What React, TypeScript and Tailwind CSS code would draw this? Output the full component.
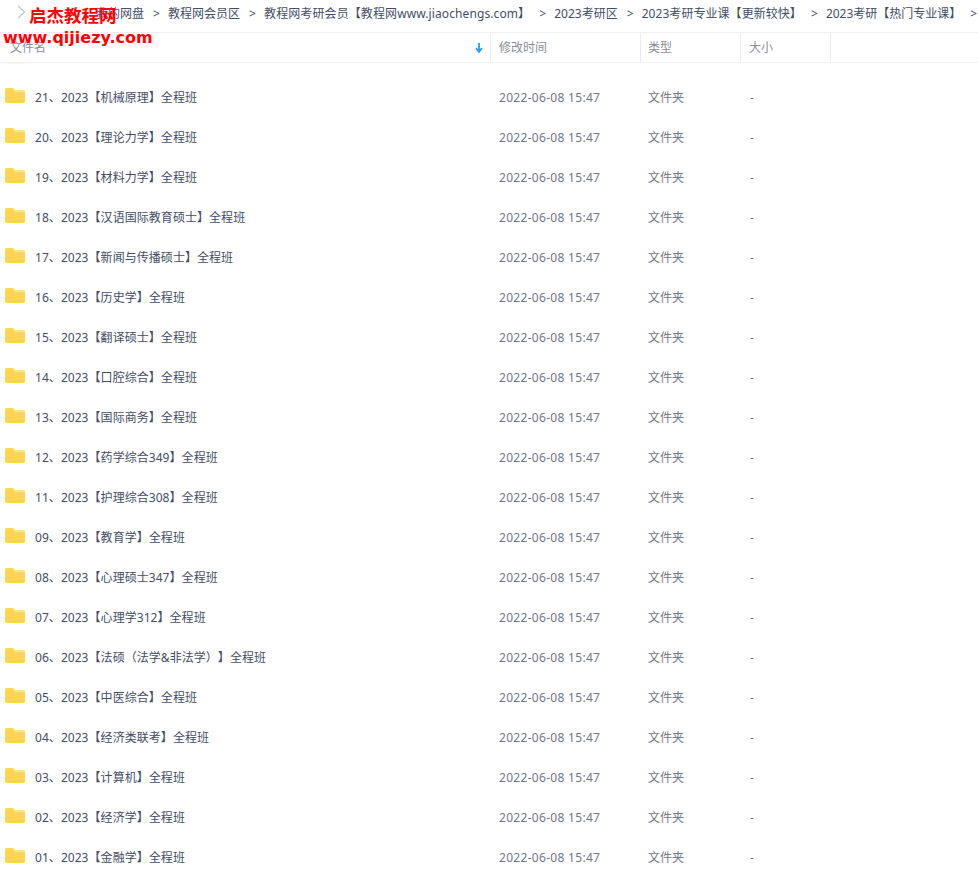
const names = [
  "21、2023【机械原理】全程班",
  "20、2023【理论力学】全程班",
  "19、2023【材料力学】全程班",
  "18、2023【汉语国际教育硕士】全程班",
  "17、2023【新闻与传播硕士】全程班",
  "16、2023【历史学】全程班",
  "15、2023【翻译硕士】全程班",
  "14、2023【口腔综合】全程班",
  "13、2023【国际商务】全程班",
  "12、2023【药学综合349】全程班",
  "11、2023【护理综合308】全程班",
  "09、2023【教育学】全程班",
  "08、2023【心理硕士347】全程班",
  "07、2023【心理学312】全程班",
  "06、2023【法硕（法学&非法学）】全程班",
  "05、2023【中医综合】全程班",
  "04、2023【经济类联考】全程班",
  "03、2023【计算机】全程班",
  "02、2023【经济学】全程班",
  "01、2023【金融学】全程班",
];

const crumbs: [string, string][] = [
  ["我的网盘", ""],
  ["教程网会员区", ""],
  ["教程网考研会员【教程网www.jiaochengs.com】", "tracking-[0.1px]"],
  ["2023考研区", ""],
  ["2023考研专业课【更新较快】", "tracking-[0.05px]"],
  ["2023考研【热门专业课】", ""],
];

function Folder() {
  return (
    <svg width="20" height="15" viewBox="0 0 20 15" className="shrink-0">
      <path d="M1.5 0H7C8 0 8.5.5 9.2 1.3L10 2.2H18.5C19.4 2.2 20 2.8 20 3.7V13.5C20 14.4 19.4 15 18.5 15H1.5C.6 15 0 14.4 0 13.5V1.5C0 .6.6 0 1.5 0Z" fill="#ffd44f" />
      <path d="M10 2.2H18.5C19.4 2.2 20 2.8 20 3.7V4.2H8.6L10 2.2Z" fill="#ffe48c" />
    </svg>
  );
}

export default function App() {
  return (
    <div className="relative w-[978px] h-[873px] overflow-hidden bg-white text-[12px] [text-spacing-trim:space-all] font-['Noto_Sans','Noto_Sans_CJK_SC',sans-serif] text-[#424e67]">
      <div className="flex items-start h-[32px] pt-[5px] pl-[17px] whitespace-nowrap text-[#424e67]">
        <svg width="9" height="14" viewBox="0 0 9 14" className="shrink-0">
          <path d="M1 1L7.5 7L1 13" fill="none" stroke="#c4c4c4" strokeWidth="1.2" />
        </svg>
        <div className="ml-[70px] flex items-center gap-[9px]">
          {crumbs.map(([c, t]) => (
            <div key={c} className="flex items-center gap-[9px]">
              <span className={t}>{c}</span>
              <span className="w-[6px] text-center">&gt;</span>
            </div>
          ))}
        </div>
      </div>
      <div className="flex h-[31px] border-y border-[#f0f0f3] text-[#8a8f99]">
        <div className="w-[491px] flex items-center justify-between pt-[1px] pl-[10px] pr-[7px] border-r border-[#ececf0]">
          <span>文件名</span>
          <svg width="8" height="10" viewBox="0 0 8 10">
            <path d="M4 0V8M1 5L4 9L7 5" fill="none" stroke="#2e9bf0" strokeWidth="1.8" />
          </svg>
        </div>
        <div className="w-[150px] flex items-center pt-[1px] pl-[8px] border-r border-[#ececf0]">修改时间</div>
        <div className="w-[100px] flex items-center pt-[1px] pl-[7px] border-r border-[#ececf0]">类型</div>
        <div className="w-[90px] flex items-center pt-[1px] pl-[8px] border-r border-[#ececf0]">大小</div>
      </div>
      <div className="pt-[14px]">
        {names.map((n) => (
          <div key={n} className="flex items-center h-[40px]">
            <div className="w-[491px] flex items-center pl-[5px] gap-[10px]">
              <div className="-mt-[3px]"><Folder /></div>
              <span className="whitespace-nowrap pt-[1px] tracking-[0.05px]">{n}</span>
            </div>
            <div className="w-[149px] pt-[1px] pl-[8px] text-[#6f7787] tracking-[0.3px]">2022-06-08 15:47</div>
            <div className="w-[101px] pt-[1px] pl-[8px] text-[#6f7787]">文件夹</div>
            <div className="pl-[9px] pt-[1px] text-[#6f7787]">-</div>
          </div>
        ))}
      </div>
      <div className="absolute left-[7px] top-[63px] w-[17px] h-[1px] bg-[#fff6e2]" />
      <div className="absolute left-[29px] top-[3px] text-[17.5px] leading-[24px] font-bold text-[#f00] whitespace-nowrap">启杰教程网</div>
      <div className="absolute left-[3px] top-[27px] text-[16px] leading-[22px] font-bold text-[#f00] whitespace-nowrap font-['DejaVu_Sans',sans-serif]">www.qijiezy.com</div>
    </div>
  );
}
